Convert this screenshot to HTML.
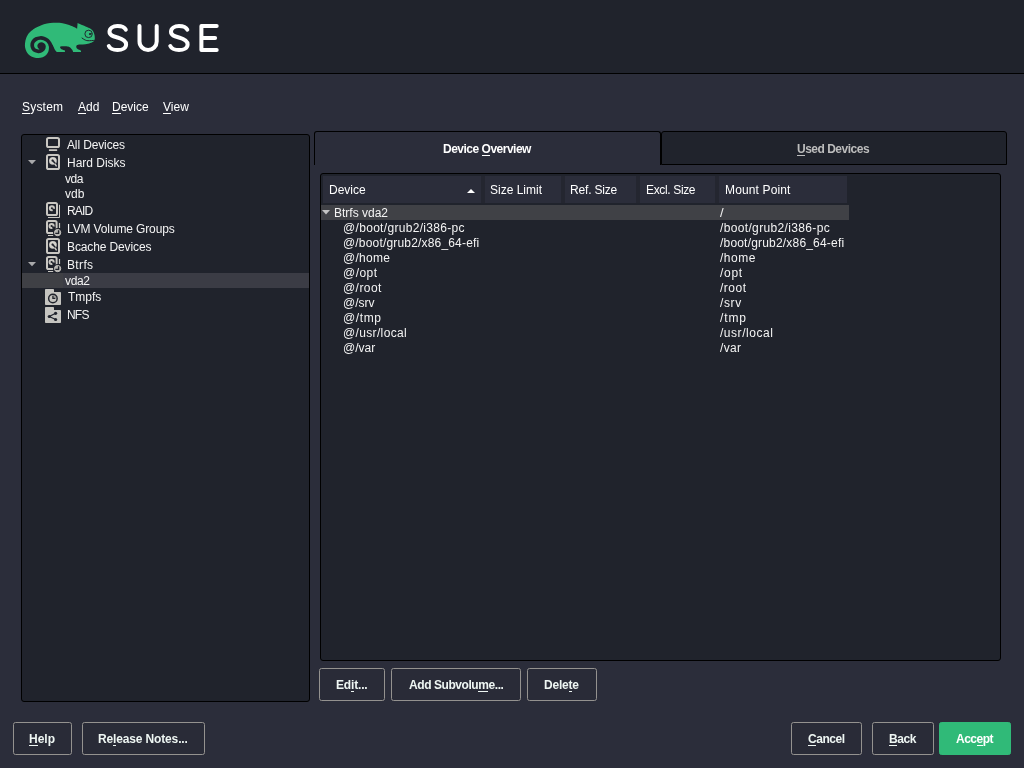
<!DOCTYPE html>
<html>
<head>
<meta charset="utf-8">
<title>YaST Partitioner</title>
<style>
html,body{margin:0;padding:0;}
body{width:1024px;height:768px;overflow:hidden;position:relative;background:#2b2d3a;
  font-family:"Liberation Sans",sans-serif;font-size:12px;color:#fff;}
.abs{position:absolute;box-sizing:border-box;}
#txt{position:absolute;left:0;top:0;width:1024px;height:768px;will-change:transform;}
.t{position:absolute;white-space:pre;line-height:14px;}
.t u{text-decoration:none;background:linear-gradient(currentColor,currentColor) no-repeat left bottom/100% 1px;}
.btn{position:absolute;box-sizing:border-box;border:1px solid #94928f;border-radius:2.5px;background:#292b37;height:33px;}
.hc{position:absolute;box-sizing:border-box;top:176px;height:27px;background:#2b2d3a;}
svg{position:absolute;overflow:visible;}
</style>
</head>
<body>
<!-- header -->
<div class="abs" style="left:0;top:0;width:1024px;height:73px;background:#20232c;"></div>
<div class="abs" style="left:0;top:73px;width:1024px;height:1px;background:#000;"></div>
<svg style="left:0;top:0;" width="240" height="73" viewBox="0 0 240 73">
<path d="M77.60 22.90 C78.47 23.30 81.07 24.52 82.80 25.30 C84.53 26.08 86.60 26.95 88.00 27.60 C89.40 28.25 90.33 28.55 91.20 29.20 C92.08 29.85 92.69 30.50 93.25 31.50 C93.81 32.50 94.29 33.98 94.55 35.20 C94.81 36.42 94.76 38.20 94.80 38.80 C94.72 39.07 94.73 39.83 94.30 40.40 C93.87 40.97 93.25 41.63 92.20 42.20 C91.15 42.77 89.57 43.40 88.00 43.80 C86.43 44.20 84.45 44.43 82.80 44.60 C81.15 44.77 79.13 44.63 78.10 44.80 C77.07 44.97 76.90 45.20 76.60 45.60 C76.30 46.00 76.13 46.63 76.30 47.20 C76.47 47.77 76.86 48.43 77.60 49.00 C78.34 49.57 80.18 50.08 80.75 50.60 C81.32 51.12 80.96 51.85 81.00 52.10 L73.20 52.10 C73.03 51.72 72.77 50.62 72.20 49.80 C71.63 48.98 70.63 47.77 69.80 47.20 C68.97 46.63 68.72 46.53 67.20 46.40 C65.68 46.27 61.85 46.18 60.70 46.40 C59.55 46.62 60.17 47.23 60.30 47.70 C60.43 48.17 60.73 48.72 61.50 49.20 C62.27 49.68 64.35 50.12 64.90 50.60 C65.45 51.08 64.82 51.85 64.80 52.10 L56.80 52.10 C56.60 51.87 56.00 51.26 55.60 50.70 C55.20 50.14 54.92 49.73 54.40 48.75 C53.88 47.77 52.82 45.46 52.50 44.80 L48.60 44.80 C48.66 45.27 48.98 46.48 48.95 47.60 C48.92 48.72 48.86 50.27 48.40 51.50 C47.94 52.73 47.15 54.03 46.20 55.00 C45.25 55.97 44.00 56.78 42.70 57.30 C41.40 57.82 39.83 58.07 38.40 58.10 C36.97 58.13 35.53 57.95 34.10 57.50 C32.67 57.05 31.03 56.33 29.80 55.40 C28.57 54.47 27.48 53.20 26.70 51.90 C25.92 50.60 25.38 49.10 25.10 47.60 C24.83 46.10 24.85 44.53 25.05 42.90 C25.25 41.27 25.64 39.43 26.30 37.80 C26.96 36.17 27.99 34.40 29.03 33.10 C30.07 31.80 31.64 30.75 32.55 30.00 C33.46 29.25 33.13 29.33 34.50 28.60 C35.87 27.87 38.67 26.43 40.75 25.60 C42.83 24.77 44.92 24.07 47.00 23.60 C49.08 23.13 51.17 22.93 53.25 22.80 C55.33 22.67 57.42 22.62 59.50 22.80 C61.58 22.98 63.60 23.32 65.75 23.90 C67.90 24.48 70.51 25.50 72.40 26.30 C74.29 27.10 76.32 28.30 77.10 28.70 L77.60 22.90 Z" fill="#30ba78"/>
<path d="M53.60 54.00 C53.28 53.07 52.32 50.12 51.70 48.40 C51.08 46.68 50.62 45.04 49.90 43.70 C49.18 42.36 48.40 41.23 47.40 40.35 C46.40 39.47 45.13 38.79 43.90 38.40 C42.67 38.01 41.30 37.90 40.00 38.00 C38.70 38.10 37.25 38.38 36.10 39.00 C34.95 39.62 33.75 40.67 33.10 41.70 C32.45 42.73 32.20 44.08 32.20 45.20 C32.20 46.32 32.52 47.48 33.10 48.40 C33.68 49.32 34.75 50.22 35.70 50.70 C36.65 51.18 37.77 51.37 38.80 51.30 C39.83 51.23 41.08 50.85 41.90 50.30 C42.72 49.75 43.40 48.78 43.70 48.00 C44.00 47.22 43.97 46.22 43.70 45.60 C43.43 44.98 42.68 44.52 42.10 44.30 C41.52 44.08 40.68 44.05 40.20 44.30 C39.72 44.55 39.25 45.30 39.20 45.80 C39.15 46.30 39.57 47.03 39.90 47.30 C40.23 47.57 40.98 47.38 41.20 47.40" fill="none" stroke="#20232c" stroke-width="3.7" stroke-linecap="round" stroke-linejoin="round"/>
<circle cx="88.6" cy="33.9" r="3.7" fill="none" stroke="#20232c" stroke-width="0.95"/>
<circle cx="90.0" cy="34.1" r="1.05" fill="#20232c"/>
<path d="M90 34.0 L92.2 33.6" stroke="#20232c" stroke-width="0.8" fill="none"/>
<path d="M82.05 38.05 C82.53 38.36 83.91 39.46 84.90 39.90 C85.89 40.34 86.43 40.62 88.00 40.70 C89.57 40.78 93.25 40.45 94.30 40.40" fill="none" stroke="#20232c" stroke-width="1.0" stroke-linecap="round"/>
<g fill="none" stroke="#ffffff" stroke-width="4" stroke-linecap="round" stroke-linejoin="round">
<path d="M125.80 29.60 C124.50 27.00 121.00 26.00 117.50 26.00 C113.00 26.00 109.50 28.20 109.50 31.80 C109.50 35.60 113.50 36.40 117.50 37.50 C122.00 38.80 126.10 40.40 126.10 44.40 C126.10 48.00 122.10 50.00 117.50 50.00 C113.50 50.00 110.10 48.80 108.80 46.00"/>
<path d="M139.50 26.00 L139.50 41.40 A8.60 8.60 0 0 0 156.70 41.40 L156.70 26.00"/>
<path d="M187.30 29.60 C186.00 27.00 182.50 26.00 179.00 26.00 C174.50 26.00 171.00 28.20 171.00 31.80 C171.00 35.60 175.00 36.40 179.00 37.50 C183.50 38.80 187.60 40.40 187.60 44.40 C187.60 48.00 183.60 50.00 179.00 50.00 C175.00 50.00 171.60 48.80 170.30 46.00"/>
<path d="M216.70 26.00 L201.40 26.00 L201.40 50.00 L216.70 50.00 M201.40 38.00 L215.10 38.00"/>
</g>
</svg>

<!-- left tree panel -->
<div class="abs" style="left:21px;top:134px;width:289px;height:568px;border:1px solid #000;border-radius:3px;background:#20232c;"></div>
<div class="abs" style="left:22px;top:273px;width:41px;height:15px;background:#3f4045;"></div>
<div class="abs" style="left:63px;top:273px;width:246px;height:15px;background:#3b3c45;"></div>
<svg style="left:0;top:0;" width="100" height="340" viewBox="0 0 100 340">
<rect x="47" y="138" width="12" height="9.1" rx="1.6" fill="none" stroke="#c9c7c2" stroke-width="2"/>
<rect x="48.9" y="149.2" width="8.3" height="1.7" rx="0.5" fill="#c9c7c2"/>
<rect x="47" y="155.00" width="12" height="14" rx="1.6" fill="none" stroke="#c9c7c2" stroke-width="2"/>
<circle cx="52.9" cy="160.80" r="3.9" fill="#c9c7c2"/>
<circle cx="52.9" cy="160.80" r="2.6" fill="none" stroke="#dddbd6" stroke-width="0.9"/>
<path d="M52.6 160.60 L56.2 164.40" stroke="#20232c" stroke-width="1.5" stroke-linecap="round"/>
<circle cx="52.5" cy="160.50" r="1.0" fill="#20232c"/>
<path d="M55.1 164.10 L56.2 165.90" stroke="#c9c7c2" stroke-width="1.5" stroke-linecap="round"/>
<rect x="47" y="239.00" width="12" height="14" rx="1.6" fill="none" stroke="#c9c7c2" stroke-width="2"/>
<circle cx="52.9" cy="244.80" r="3.9" fill="#c9c7c2"/>
<circle cx="52.9" cy="244.80" r="2.6" fill="none" stroke="#dddbd6" stroke-width="0.9"/>
<path d="M52.6 244.60 L56.2 248.40" stroke="#20232c" stroke-width="1.5" stroke-linecap="round"/>
<circle cx="52.5" cy="244.50" r="1.0" fill="#20232c"/>
<path d="M55.1 248.10 L56.2 249.90" stroke="#c9c7c2" stroke-width="1.5" stroke-linecap="round"/>
<rect x="47" y="203.00" width="10" height="12" rx="1.6" fill="none" stroke="#c9c7c2" stroke-width="2"/>
<path d="M59.5 204.80 L59.5 217.50 L48 217.50" fill="none" stroke="#c9c7c2" stroke-width="1"/>
<circle cx="51.90" cy="208.20" r="2.05" fill="none" stroke="#c9c7c2" stroke-width="2.0"/>
<path d="M51.90 208.20 L56.10 209.20 L53.50 212.40 Z" fill="#20232c"/>
<rect x="47" y="221.00" width="9.6" height="12" rx="1.6" fill="none" stroke="#c9c7c2" stroke-width="2"/>
<circle cx="51.60" cy="226.00" r="2.05" fill="none" stroke="#c9c7c2" stroke-width="2.0"/>
<path d="M51.60 226.00 L55.80 227.00 L53.20 230.20 Z" fill="#20232c"/>
<path d="M59.5 223.00 L59.5 228.00" stroke="#c9c7c2" stroke-width="1.2"/>
<path d="M48 235.50 L53.2 235.50" stroke="#c9c7c2" stroke-width="1"/>
<circle cx="57.60" cy="232.60" r="4.6" fill="#20232c"/>
<circle cx="57.60" cy="232.60" r="3.1" fill="#b4b3af" stroke="#c9c7c2" stroke-width="1.0"/>
<path d="M58.60 230.20 L58.60 233.40 L55.30 233.40" fill="none" stroke="#20232c" stroke-width="1.35" stroke-linejoin="round"/>
<rect x="47" y="257.00" width="9.6" height="12" rx="1.6" fill="none" stroke="#c9c7c2" stroke-width="2"/>
<circle cx="51.60" cy="262.00" r="2.05" fill="none" stroke="#c9c7c2" stroke-width="2.0"/>
<path d="M51.60 262.00 L55.80 263.00 L53.20 266.20 Z" fill="#20232c"/>
<path d="M59.5 259.00 L59.5 264.00" stroke="#c9c7c2" stroke-width="1.2"/>
<path d="M48 271.50 L53.2 271.50" stroke="#c9c7c2" stroke-width="1"/>
<circle cx="57.60" cy="268.60" r="4.6" fill="#20232c"/>
<circle cx="57.60" cy="268.60" r="3.1" fill="#b4b3af" stroke="#c9c7c2" stroke-width="1.0"/>
<path d="M58.60 266.20 L58.60 269.40 L55.30 269.40" fill="none" stroke="#20232c" stroke-width="1.35" stroke-linejoin="round"/>
<path d="M45.8 289.00 L53.2 289.00 Q54 289.00 54 289.80 L54 291.90 L60.2 291.90 Q61 291.90 61 292.70 L61 304.20 Q61 305.00 60.2 305.00 L45.8 305.00 Q45 305.00 45 304.20 L45 289.80 Q45 289.00 45.8 289.00 Z" fill="#c5c4c0"/>
<path d="M52.90 298.40 L52.90 294.80 A3.6 3.6 0 0 1 56.50 298.40 Z" fill="#a3a29e"/>
<circle cx="52.90" cy="298.40" r="4.25" fill="none" stroke="#20232c" stroke-width="1.45"/>
<path d="M52.90 295.80 L52.90 298.40 L55.30 298.40" fill="none" stroke="#20232c" stroke-width="1.25"/>
<path d="M45.8 307.00 L53.2 307.00 Q54 307.00 54 307.80 L54 309.90 L60.2 309.90 Q61 309.90 61 310.70 L61 322.20 Q61 323.00 60.2 323.00 L45.8 323.00 Q45 323.00 45 322.20 L45 307.80 Q45 307.00 45.8 307.00 Z" fill="#c5c4c0"/>
<path d="M55.6 313.3 L49.3 316.5 L55.6 319.5" fill="none" stroke="#20232c" stroke-width="1.25"/>
<circle cx="49.30" cy="316.50" r="1.6" fill="#20232c"/>
<circle cx="55.60" cy="313.30" r="1.6" fill="#20232c"/>
<circle cx="55.60" cy="319.50" r="1.6" fill="#20232c"/>
</svg>

<!-- tabs -->
<div class="abs" style="left:314px;top:131px;width:347px;height:34px;border:1px solid #000;border-bottom:none;border-radius:3px 3px 0 0;background:#2b2d3a;"></div>
<div class="abs" style="left:661px;top:131px;width:346px;height:34px;border:1px solid #000;border-radius:3px 3px 0 0;background:#20232c;"></div>
<!-- table container -->
<div class="abs" style="left:320px;top:173px;width:681px;height:488px;border:1px solid #000;border-radius:3px;background:#20232c;"></div>
<div class="abs" style="left:323px;top:176px;width:524px;height:27px;background:#242630;"></div>
<div class="hc" style="left:323px;width:158px;"></div>
<div class="hc" style="left:485px;width:76px;"></div>
<div class="hc" style="left:565px;width:71px;"></div>
<div class="hc" style="left:640px;width:75px;"></div>
<div class="hc" style="left:719px;width:128px;"></div>
<svg style="left:467px;top:189px;" width="8" height="4" viewBox="0 0 8 4"><path d="M0 4 L4 0 L8 4 Z" fill="#ffffff"/></svg>
<div class="abs" style="left:321px;top:205px;width:528px;height:15px;background:#404146;"></div>
<svg style="left:322px;top:210px;" width="8" height="5" viewBox="0 0 8 5"><path d="M0 0 L8 0 L4 4.5 Z" fill="#c4c4c4"/></svg>
<!-- tree expanders -->
<svg style="left:28px;top:160px;" width="8" height="5" viewBox="0 0 8 5"><path d="M0 0 L8 0 L4 4.3 Z" fill="#a9a9ab"/></svg>
<svg style="left:28px;top:262px;" width="8" height="5" viewBox="0 0 8 5"><path d="M0 0 L8 0 L4 4.3 Z" fill="#a9a9ab"/></svg>
<!-- buttons -->
<div class="btn" style="left:319px;top:668px;width:66px;"></div>
<div class="btn" style="left:391px;top:668px;width:130px;"></div>
<div class="btn" style="left:527px;top:668px;width:70px;"></div>
<div class="btn" style="left:13px;top:722px;width:59px;"></div>
<div class="btn" style="left:82px;top:722px;width:123px;"></div>
<div class="btn" style="left:791px;top:722px;width:71px;"></div>
<div class="btn" style="left:872px;top:722px;width:62px;"></div>
<div class="btn" style="left:939px;top:722px;width:72px;background:#30ba78;border-color:#30ba78;"></div>
<!-- text -->
<div id="txt">
<span class="t" style="left:22.00px;top:99.84px;font-size:12px;letter-spacing:0.200px;color:#ffffff;"><u>S</u>ystem</span>
<span class="t" style="left:78.00px;top:99.84px;font-size:12px;letter-spacing:0.000px;color:#ffffff;"><u>A</u>dd</span>
<span class="t" style="left:112.00px;top:99.84px;font-size:12px;letter-spacing:0.000px;color:#ffffff;"><u>D</u>evice</span>
<span class="t" style="left:163.00px;top:99.84px;font-size:12px;letter-spacing:0.000px;color:#ffffff;"><u>V</u>iew</span>
<span class="t" style="left:67.00px;top:137.84px;font-size:12px;letter-spacing:-0.130px;color:#f4f4f4;">All Devices</span>
<span class="t" style="left:67.00px;top:155.84px;font-size:12px;letter-spacing:-0.022px;color:#f4f4f4;">Hard Disks</span>
<span class="t" style="left:65.00px;top:171.84px;font-size:12px;letter-spacing:-0.500px;color:#f4f4f4;">vda</span>
<span class="t" style="left:65.00px;top:186.84px;font-size:12px;letter-spacing:0.000px;color:#f4f4f4;">vdb</span>
<span class="t" style="left:67.00px;top:203.84px;font-size:12px;letter-spacing:-0.850px;color:#f4f4f4;">RAID</span>
<span class="t" style="left:67.00px;top:221.84px;font-size:12px;letter-spacing:-0.131px;color:#f4f4f4;">LVM Volume Groups</span>
<span class="t" style="left:67.00px;top:239.84px;font-size:12px;letter-spacing:-0.123px;color:#f4f4f4;">Bcache Devices</span>
<span class="t" style="left:67.00px;top:257.84px;font-size:12px;letter-spacing:0.350px;color:#f4f4f4;">Btrfs</span>
<span class="t" style="left:65.00px;top:273.84px;font-size:12px;letter-spacing:-0.333px;color:#f4f4f4;">vda2</span>
<span class="t" style="left:68.00px;top:289.84px;font-size:12px;letter-spacing:0.000px;color:#f4f4f4;">Tmpfs</span>
<span class="t" style="left:67.00px;top:307.84px;font-size:12px;letter-spacing:-0.800px;color:#f4f4f4;">NFS</span>
<span class="t" style="left:443.00px;top:141.84px;font-size:12px;letter-spacing:-0.500px;color:#ffffff;font-weight:bold;">Device <u>O</u>verview</span>
<span class="t" style="left:797.00px;top:141.84px;font-size:12px;letter-spacing:-0.500px;color:#bdbdbd;font-weight:bold;"><u>U</u>sed Devices</span>
<span class="t" style="left:329.00px;top:182.84px;font-size:12px;letter-spacing:0.000px;color:#ffffff;">Device</span>
<span class="t" style="left:490.00px;top:182.84px;font-size:12px;letter-spacing:0.000px;color:#ffffff;">Size Limit</span>
<span class="t" style="left:570.00px;top:182.84px;font-size:12px;letter-spacing:-0.175px;color:#ffffff;">Ref. Size</span>
<span class="t" style="left:646.00px;top:182.84px;font-size:12px;letter-spacing:-0.350px;color:#ffffff;">Excl. Size</span>
<span class="t" style="left:725.00px;top:182.84px;font-size:12px;letter-spacing:0.140px;color:#ffffff;">Mount Point</span>
<span class="t" style="left:334.00px;top:205.84px;font-size:12px;letter-spacing:0.000px;color:#f4f4f4;">Btrfs vda2</span>
<span class="t" style="left:720.00px;top:205.50px;font-size:13px;letter-spacing:0.000px;color:#f4f4f4;">/</span>
<span class="t" style="left:343.00px;top:220.84px;font-size:12px;letter-spacing:0.316px;color:#f4f4f4;">@/boot/grub2/i386-pc</span>
<span class="t" style="left:720.00px;top:220.84px;font-size:12px;letter-spacing:0.350px;color:#f4f4f4;">/boot/grub2/i386-pc</span>
<span class="t" style="left:343.00px;top:235.84px;font-size:12px;letter-spacing:0.177px;color:#f4f4f4;">@/boot/grub2/x86_64-efi</span>
<span class="t" style="left:720.00px;top:235.84px;font-size:12px;letter-spacing:0.190px;color:#f4f4f4;">/boot/grub2/x86_64-efi</span>
<span class="t" style="left:343.00px;top:250.84px;font-size:12px;letter-spacing:0.300px;color:#f4f4f4;">@/home</span>
<span class="t" style="left:720.00px;top:250.84px;font-size:12px;letter-spacing:0.500px;color:#f4f4f4;">/home</span>
<span class="t" style="left:343.00px;top:265.84px;font-size:12px;letter-spacing:0.450px;color:#f4f4f4;">@/opt</span>
<span class="t" style="left:720.00px;top:265.84px;font-size:12px;letter-spacing:0.700px;color:#f4f4f4;">/opt</span>
<span class="t" style="left:343.00px;top:280.84px;font-size:12px;letter-spacing:0.440px;color:#f4f4f4;">@/root</span>
<span class="t" style="left:720.00px;top:280.84px;font-size:12px;letter-spacing:0.500px;color:#f4f4f4;">/root</span>
<span class="t" style="left:343.00px;top:295.84px;font-size:12px;letter-spacing:0.000px;color:#f4f4f4;">@/srv</span>
<span class="t" style="left:720.00px;top:295.84px;font-size:12px;letter-spacing:0.633px;color:#f4f4f4;">/srv</span>
<span class="t" style="left:343.00px;top:310.84px;font-size:12px;letter-spacing:0.600px;color:#f4f4f4;">@/tmp</span>
<span class="t" style="left:720.00px;top:310.84px;font-size:12px;letter-spacing:0.900px;color:#f4f4f4;">/tmp</span>
<span class="t" style="left:343.00px;top:325.84px;font-size:12px;letter-spacing:0.350px;color:#f4f4f4;">@/usr/local</span>
<span class="t" style="left:720.00px;top:325.84px;font-size:12px;letter-spacing:0.533px;color:#f4f4f4;">/usr/local</span>
<span class="t" style="left:343.00px;top:340.84px;font-size:12px;letter-spacing:0.000px;color:#f4f4f4;">@/var</span>
<span class="t" style="left:720.00px;top:340.84px;font-size:12px;letter-spacing:0.300px;color:#f4f4f4;">/var</span>
<span class="t" style="left:336.00px;top:677.84px;font-size:12px;letter-spacing:-0.170px;color:#eef6f3;font-weight:bold;">Ed<u>i</u>t...</span>
<span class="t" style="left:409.00px;top:677.84px;font-size:12px;letter-spacing:-0.433px;color:#eef6f3;font-weight:bold;">Add Subvolu<u>m</u>e...</span>
<span class="t" style="left:544.00px;top:677.84px;font-size:12px;letter-spacing:-0.200px;color:#eef6f3;font-weight:bold;">Dele<u>t</u>e</span>
<span class="t" style="left:29.00px;top:731.84px;font-size:12px;letter-spacing:0.000px;color:#eef6f3;font-weight:bold;"><u>H</u>elp</span>
<span class="t" style="left:98.00px;top:731.84px;font-size:12px;letter-spacing:-0.147px;color:#eef6f3;font-weight:bold;">Re<u>l</u>ease Notes...</span>
<span class="t" style="left:808.00px;top:731.84px;font-size:12px;letter-spacing:-0.460px;color:#eef6f3;font-weight:bold;"><u>C</u>ancel</span>
<span class="t" style="left:889.00px;top:731.84px;font-size:12px;letter-spacing:-0.433px;color:#eef6f3;font-weight:bold;"><u>B</u>ack</span>
<span class="t" style="left:956.00px;top:731.84px;font-size:12px;letter-spacing:-0.500px;color:#ffffff;font-weight:bold;">Acc<u>e</u>pt</span>
</div>
</body>
</html>
